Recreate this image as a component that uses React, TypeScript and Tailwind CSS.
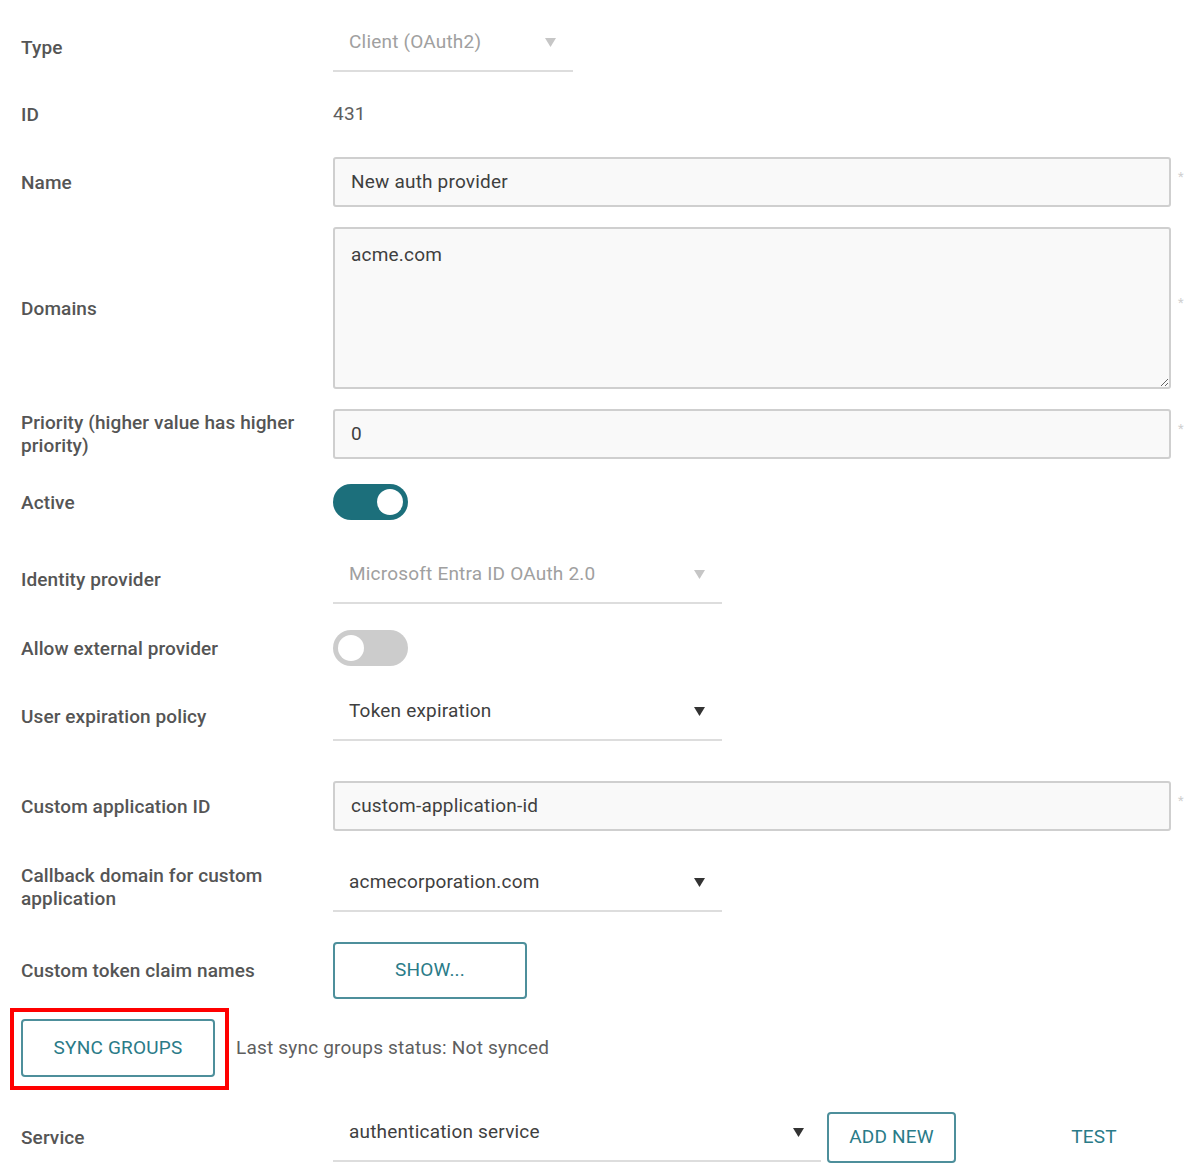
import React from 'react';

const label = 'w-[312px] shrink-0 pr-[12px] text-[19px] leading-[23px] font-medium tracking-[0.1px] text-[#555555]';

function Caret({ light }: { light?: boolean }) {
  return (
    <svg width="11" height="9" viewBox="0 0 11 9" className="shrink-0">
      <path d="M0 0 L11 0 L5.5 9 Z" fill={light ? '#c6c6c6' : '#333333'} />
    </svg>
  );
}

function Select({ value, width, disabled }: { value: string; width: string; disabled?: boolean }) {
  return (
    <div
      className={`${width} h-[50px] flex items-center justify-between pl-[16px] pr-[17px] pb-[8px] border-b-2 border-[#dddddd] text-[19px] tracking-[0.2px] ${
        disabled ? 'text-[#a0a0a0]' : 'text-[#3f3f3f]'
      }`}
    >
      <span>{value}</span>
      <Caret light={disabled} />
    </div>
  );
}

function Input({ value }: { value: string }) {
  return (
    <div className="flex-1 flex items-center">
      <div className="flex-1 h-[50px] flex items-center px-[16px] bg-[#f9f9f9] border-2 border-[#cfcfcf] rounded-[3px] text-[19px] tracking-[0.2px] text-[#3f3f3f]">
        {value}
      </div>
      <span className="w-[23px] pl-[7px] -mt-[10px] text-[13px] text-[#d0d0d0]">*</span>
    </div>
  );
}

function Toggle({ on }: { on?: boolean }) {
  return (
    <div
      className={`w-[75px] h-[36px] rounded-full flex items-center px-[5px] ${
        on ? 'bg-[#1c6f7b] justify-end' : 'bg-[#cccccc] justify-start'
      }`}
    >
      <div className="w-[26px] h-[26px] rounded-full bg-white" />
    </div>
  );
}

function OutlineButton({ text, className }: { text: string; className: string }) {
  return (
    <button
      className={`${className} flex items-center justify-center border-2 border-[#4d8f9b] rounded-[4px] bg-white text-[19px] tracking-[0.2px] text-[#2a7b88] uppercase`}
    >
      {text}
    </button>
  );
}

export default function App() {
  return (
    <div className="w-[1194px] h-[1172px] overflow-hidden bg-white pl-[21px] pt-[12px]" style={{ fontFamily: 'Roboto, "Noto Sans", sans-serif' }}>
      <div className="flex items-center h-[70px]">
        <div className={label}>Type</div>
        <Select value="Client (OAuth2)" width="w-[240px]" disabled />
      </div>

      <div className="flex items-center h-[64px]">
        <div className={label}>ID</div>
        <div className="text-[19px] tracking-[0.2px] text-[#5e5e5e]">431</div>
      </div>

      <div className="flex items-center h-[72px]">
        <div className={label}>Name</div>
        <Input value="New auth provider" />
      </div>

      <div className="flex items-center h-[180px]">
        <div className={label}>Domains</div>
        <div className="flex-1 flex items-center">
          <textarea
            className="flex-1 h-[162px] px-[16px] py-[12px] bg-[#f9f9f9] border-2 border-[#cfcfcf] rounded-[3px] text-[19px] tracking-[0.2px] text-[#3f3f3f] outline-none"
            defaultValue="acme.com"
          />
          <span className="w-[23px] pl-[7px] -mt-[10px] text-[13px] text-[#d0d0d0]">*</span>
        </div>
      </div>

      <div className="flex items-center h-[72px]">
        <div className={label}>Priority (higher value has higher priority)</div>
        <Input value="0" />
      </div>

      <div className="flex items-center h-[64px]">
        <div className={label}>Active</div>
        <Toggle on />
      </div>

      <div className="flex items-center h-[90px]">
        <div className={label}>Identity provider</div>
        <Select value="Microsoft Entra ID OAuth 2.0" width="w-[389px]" disabled />
      </div>

      <div className="flex items-center h-[48px]">
        <div className={label}>Allow external provider</div>
        <Toggle />
      </div>

      <div className="flex items-center h-[88px]">
        <div className={label}>User expiration policy</div>
        <Select value="Token expiration" width="w-[389px]" />
      </div>

      <div className="flex items-center h-[92px]">
        <div className={label}>Custom application ID</div>
        <Input value="custom-application-id" />
      </div>

      <div className="flex items-center h-[70px]">
        <div className={label}>Callback domain for custom application</div>
        <Select value="acmecorporation.com" width="w-[389px]" />
      </div>

      <div className="flex items-center h-[96px]">
        <div className={label}>Custom token claim names</div>
        <OutlineButton text="Show..." className="w-[194px] h-[57px]" />
      </div>

      <div className="flex items-center h-[60px]">
        <div className="relative">
          <OutlineButton text="Sync groups" className="w-[194px] h-[58px]" />
          <span className="absolute -left-[11px] -right-[14px] -top-[11px] -bottom-[13px] border-[4px] border-[#ff0000] pointer-events-none" />
        </div>
        <span className="ml-[21px] text-[19px] tracking-[0.2px] text-[#5e5e5e]">Last sync groups status: Not synced</span>
      </div>

      <div className="flex items-center h-[118px]">
        <div className={label}>Service</div>
        <Select value="authentication service" width="w-[488px]" />
        <OutlineButton text="Add new" className="ml-[6px] w-[129px] h-[51px]" />
        <button className="ml-[90px] w-[96px] h-[51px] text-[19px] tracking-[0.2px] text-[#2a7b88] uppercase">Test</button>
      </div>
    </div>
  );
}
